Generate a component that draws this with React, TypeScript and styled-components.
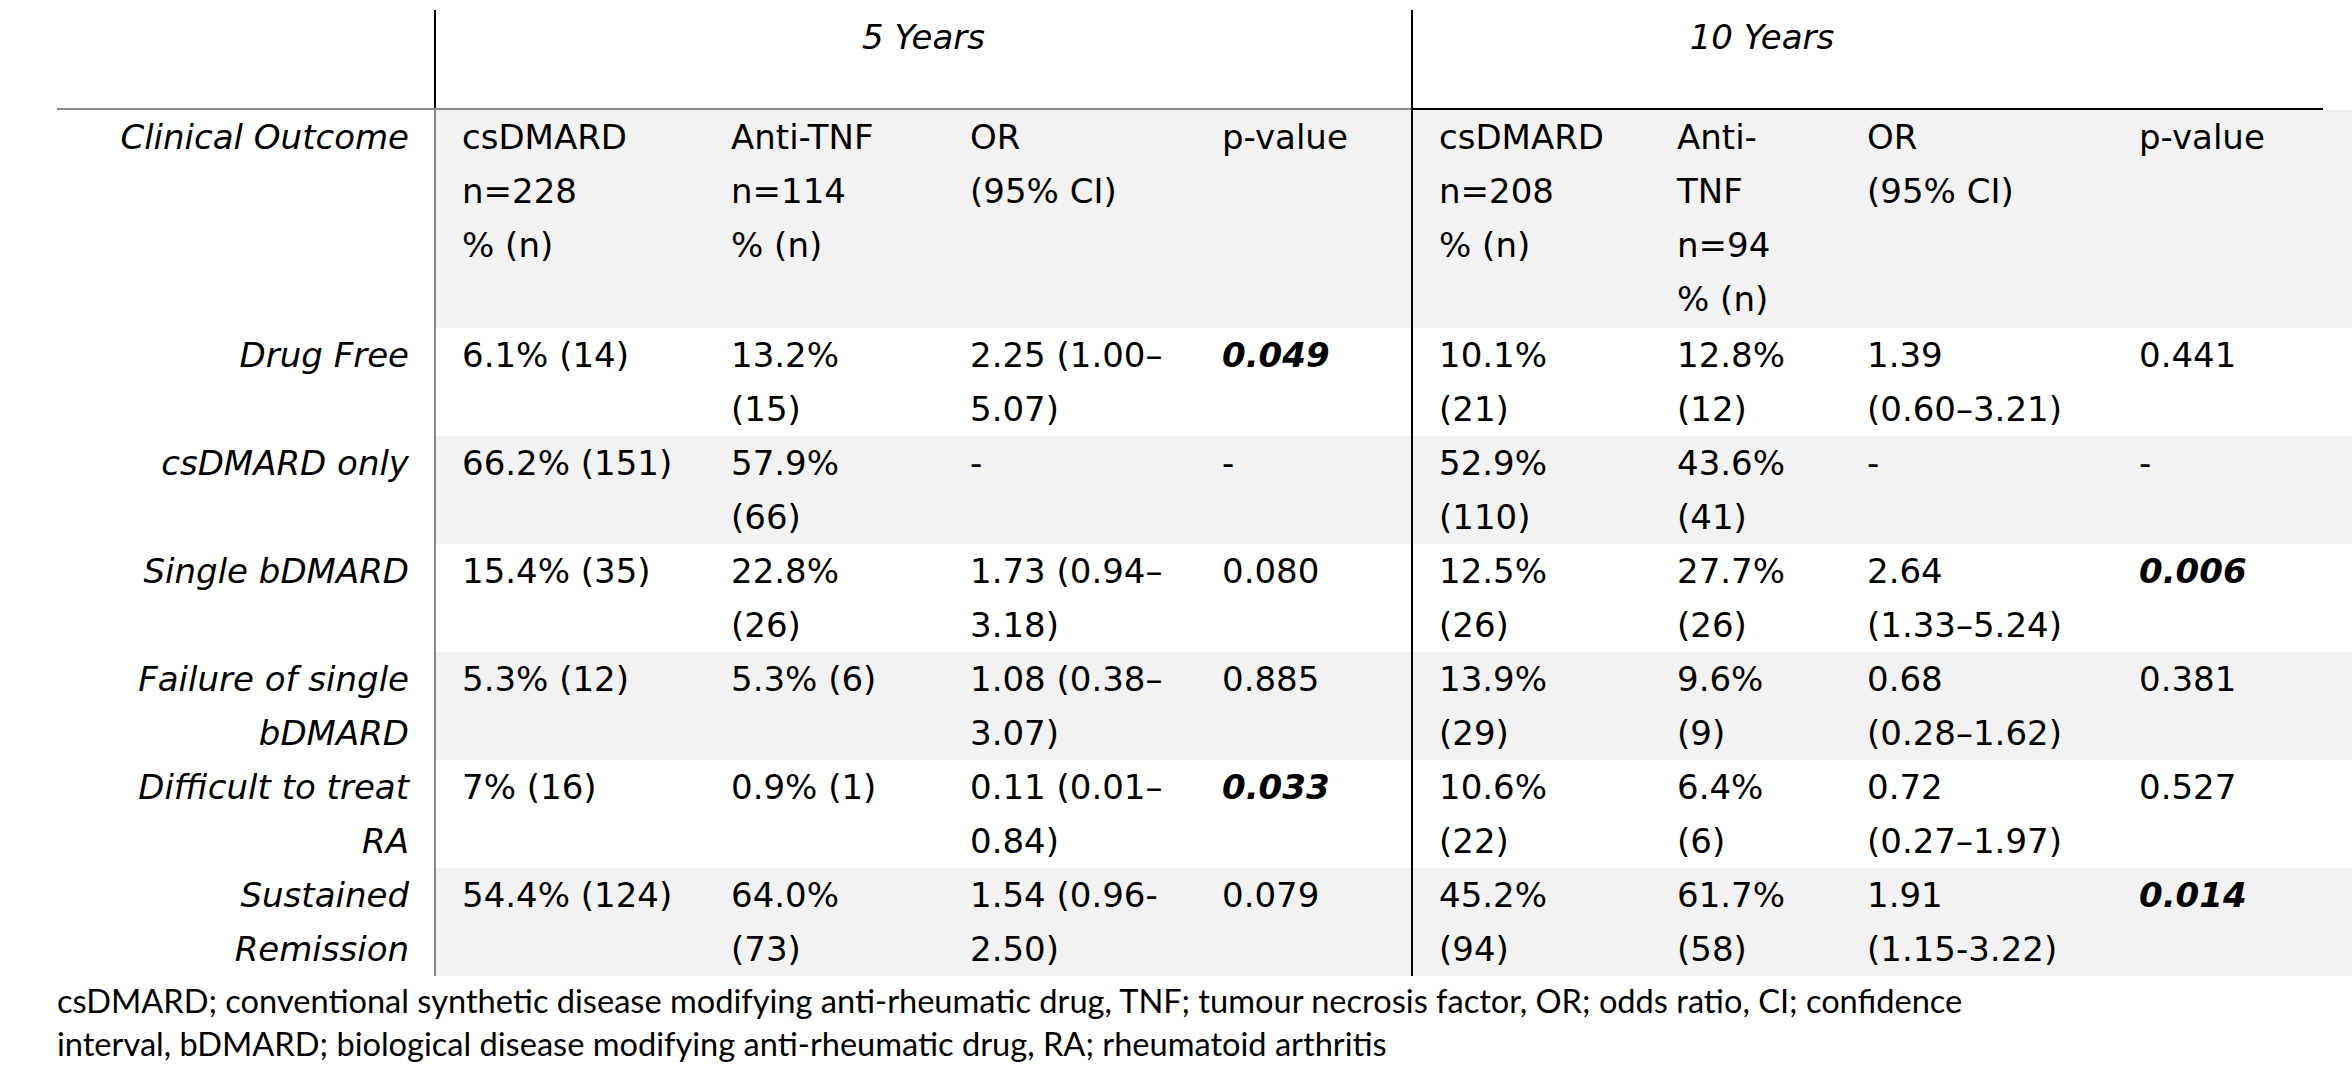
import React from "react";
import styled, { createGlobalStyle } from "styled-components";

const GlobalStyle = createGlobalStyle`
  html, body {
    margin: 0;
    padding: 0;
    background: #ffffff;
  }
  body {
    font-family: "DejaVu Sans", "Liberation Sans", sans-serif;
    color: #000000;
  }
`;

// column widths, measured off the source document
const COLS = "377px 269px 239px 252px 217px 238px 190px 272px 212px";
const GREY_RULE = "#8a8a8a";
const SHADE = "#f2f2f2";

const Page = styled.div`
  padding: 10px 0 0 57px;
  font-size: 34px;
`;

const Row = styled.div<{ $shade?: boolean; $height: number }>`
  display: grid;
  grid-template-columns: ${COLS};
  height: ${(p) => p.$height}px;
  background: ${(p) => (p.$shade ? SHADE : "transparent")};
`;

const Rule = styled.div<{ $span: number; $tone: "grey" | "black" }>`
  grid-column: span ${(p) => p.$span};
  height: 2px;
  background: ${(p) => (p.$tone === "grey" ? GREY_RULE : "#000")};
`;

const Cell = styled.div<{ $divider?: "grey" | "black"; $bold?: boolean }>`
  padding-left: ${(p) => (p.$divider ? 26 : 28)}px;
  border-left: ${(p) =>
    p.$divider ? `2px solid ${p.$divider === "grey" ? GREY_RULE : "#000"}` : "none"};
  line-height: 54px;
  white-space: nowrap;
  font-weight: ${(p) => (p.$bold ? 700 : 400)};
  font-style: ${(p) => (p.$bold ? "italic" : "normal")};
`;

const Label = styled.div`
  background: #ffffff;
  padding-right: 25px;
  text-align: right;
  font-style: italic;
  line-height: 54px;
  white-space: nowrap;
`;

const Group = styled.div<{ $span: number; $divider?: boolean }>`
  grid-column: span ${(p) => p.$span};
  border-left: ${(p) => (p.$divider ? "2px solid #000" : "none")};
  text-align: center;
  font-style: italic;
  line-height: 54px;
`;

const Footnote = styled.p`
  margin: 3px 0 0;
  font-family: Lato, "Liberation Sans", sans-serif;
  font-size: 32.6px;
  line-height: 43px;
`;

type Value = string[] | { sig: string };

type Outcome = {
  label: string[];
  values: Value[];
};

const headers: string[][] = [
  ["csDMARD", "n=228", "% (n)"],
  ["Anti-TNF", "n=114", "% (n)"],
  ["OR", "(95% CI)"],
  ["p-value"],
  ["csDMARD", "n=208", "% (n)"],
  ["Anti-", "TNF", "n=94", "% (n)"],
  ["OR", "(95% CI)"],
  ["p-value"],
];

const outcomes: Outcome[] = [
  {
    label: ["Drug Free"],
    values: [
      ["6.1% (14)"],
      ["13.2%", "(15)"],
      ["2.25 (1.00–", "5.07)"],
      { sig: "0.049" },
      ["10.1%", "(21)"],
      ["12.8%", "(12)"],
      ["1.39", "(0.60–3.21)"],
      ["0.441"],
    ],
  },
  {
    label: ["csDMARD only"],
    values: [
      ["66.2% (151)"],
      ["57.9%", "(66)"],
      ["-"],
      ["-"],
      ["52.9%", "(110)"],
      ["43.6%", "(41)"],
      ["-"],
      ["-"],
    ],
  },
  {
    label: ["Single bDMARD"],
    values: [
      ["15.4% (35)"],
      ["22.8%", "(26)"],
      ["1.73 (0.94–", "3.18)"],
      ["0.080"],
      ["12.5%", "(26)"],
      ["27.7%", "(26)"],
      ["2.64", "(1.33–5.24)"],
      { sig: "0.006" },
    ],
  },
  {
    label: ["Failure of single", "bDMARD"],
    values: [
      ["5.3% (12)"],
      ["5.3% (6)"],
      ["1.08 (0.38–", "3.07)"],
      ["0.885"],
      ["13.9%", "(29)"],
      ["9.6%", "(9)"],
      ["0.68", "(0.28–1.62)"],
      ["0.381"],
    ],
  },
  {
    label: ["Difficult to treat", "RA"],
    values: [
      ["7% (16)"],
      ["0.9% (1)"],
      ["0.11 (0.01–", "0.84)"],
      { sig: "0.033" },
      ["10.6%", "(22)"],
      ["6.4%", "(6)"],
      ["0.72", "(0.27–1.97)"],
      ["0.527"],
    ],
  },
  {
    label: ["Sustained", "Remission"],
    values: [
      ["54.4% (124)"],
      ["64.0%", "(73)"],
      ["1.54 (0.96-", "2.50)"],
      ["0.079"],
      ["45.2%", "(94)"],
      ["61.7%", "(58)"],
      ["1.91", "(1.15-3.22)"],
      { sig: "0.014" },
    ],
  },
];

function dividerFor(i: number): "grey" | "black" | undefined {
  if (i === 0) return "grey";
  if (i === 4) return "black";
  return undefined;
}

function Lines({ lines }: { lines: string[] }) {
  return (
    <>
      {lines.map((l, i) => (
        <div key={i}>{l}</div>
      ))}
    </>
  );
}

export default function App() {
  return (
    <>
      <GlobalStyle />
      <Page>
        <Row $height={98}>
          <Label />
          <Group $span={4} $divider>
            5 Years
          </Group>
          <Group $span={3} $divider>
            10 Years
          </Group>
          <Cell />
        </Row>
        <Row $height={2}>
          <Rule $span={5} $tone="grey" />
          <Rule $span={4} $tone="black" />
        </Row>
        <Row $shade $height={218}>
          <Label>Clinical Outcome</Label>
          {headers.map((h, i) => (
            <Cell key={i} $divider={dividerFor(i)}>
              <Lines lines={h} />
            </Cell>
          ))}
        </Row>
        {outcomes.map((o, r) => (
          <Row key={o.label.join(" ")} $shade={r % 2 === 1} $height={108}>
            <Label>
              <Lines lines={o.label} />
            </Label>
            {o.values.map((v, i) =>
              Array.isArray(v) ? (
                <Cell key={i} $divider={dividerFor(i)}>
                  <Lines lines={v} />
                </Cell>
              ) : (
                <Cell key={i} $divider={dividerFor(i)} $bold>
                  {v.sig}
                </Cell>
              )
            )}
          </Row>
        ))}
        <Footnote>
          csDMARD; conventional synthetic disease modifying anti-rheumatic drug, TNF; tumour
          necrosis factor, OR; odds ratio, CI; confidence
          <br />
          interval, bDMARD; biological disease modifying anti-rheumatic drug, RA; rheumatoid
          arthritis
        </Footnote>
      </Page>
    </>
  );
}
